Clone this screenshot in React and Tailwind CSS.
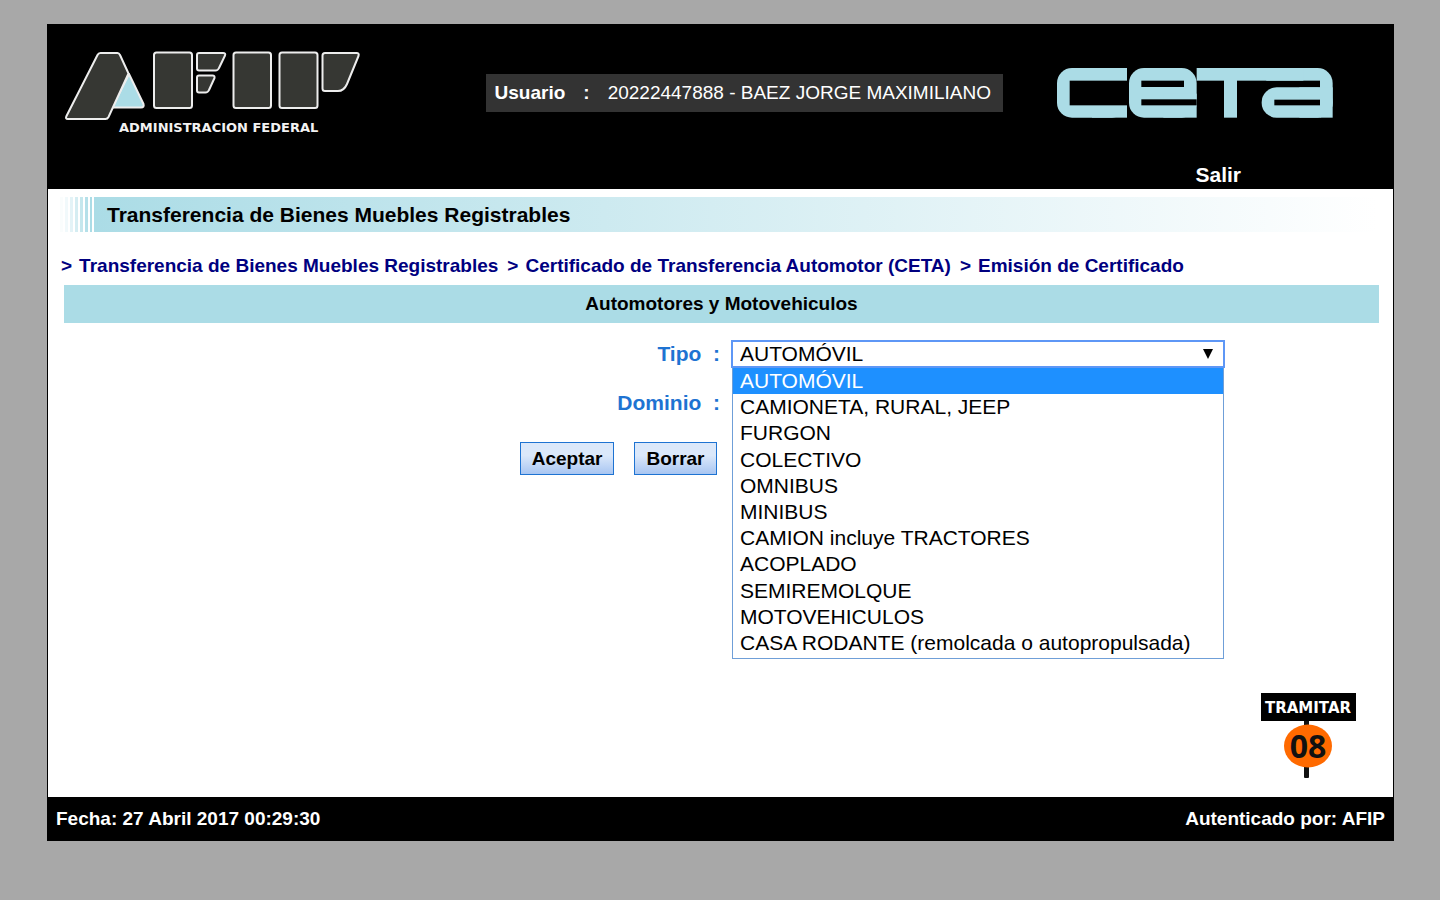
import { useState } from "react";

const TIPOS = [
  "AUTOMÓVIL",
  "CAMIONETA, RURAL, JEEP",
  "FURGON",
  "COLECTIVO",
  "OMNIBUS",
  "MINIBUS",
  "CAMION incluye TRACTORES",
  "ACOPLADO",
  "SEMIREMOLQUE",
  "MOTOVEHICULOS",
  "CASA RODANTE (remolcada o autopropulsada)",
];

const RUTA = [
  "Transferencia de Bienes Muebles Registrables",
  "Certificado de Transferencia Automotor (CETA)",
  "Emisión de Certificado",
];

function LogoAfip() {
  return (
    <svg width="298" height="84" viewBox="64 51 298 84" role="img" aria-label="AFIP">
      <g fill="#363733" stroke="#ededed" strokeWidth="2" strokeLinejoin="round">
        <path d="M129 74 L143.500 104 Q144.500 107.500 141 107.500 H112 Z" fill="#abdce6" />
        <path d="M100.500 53 H117.500 Q119 53 120 55 L128.500 73.500 L108.500 117 Q107.500 119 105.500 119 H68 Q65 119 66.500 116 L97.500 55 Q98.500 53 100.500 53 Z" />
        <rect x="154" y="52.500" width="38" height="55.500" rx="2.500" />
        <path d="M199 53 H223 Q226 53 225 55.500 L219 68 Q218 70.500 215.500 70.500 H199 Q197 70.500 197 68.500 V55 Q197 53 199 53 Z" />
        <path d="M199 75.500 H212.500 Q215 75.500 214.500 78 L209 90 Q208 92.500 205.500 92.500 H199 Q197 92.500 197 90.500 V77.500 Q197 75.500 199 75.500 Z" />
        <rect x="233.500" y="52.500" width="37.500" height="55.500" rx="2.500" />
        <rect x="279.500" y="52.500" width="38" height="55.500" rx="2.500" />
        <path d="M325 53 H356.500 Q359.500 53 358.500 56 L347 84 Q344 91 338 91 H325 Q322.500 91 322.500 88.500 V55.500 Q322.500 53 325 53 Z" />
      </g>
      <text x="119" y="132" fill="#f2f2f2" className="font-['DejaVu_Sans'] text-[13px] font-bold">
        ADMINISTRACION FEDERAL
      </text>
    </svg>
  );
}

function LogoCeta() {
  return (
    <svg width="276" height="50" viewBox="52 53 828 150" role="img" aria-label="CETA">
      <g fill="#abdce6">
        <rect x="52" y="53" width="210" height="149" rx="45" />
        <rect x="157" y="53" width="105" height="149" />
        <rect x="90" y="91" width="172" height="74" fill="#000" />

        <rect x="268" y="53" width="203" height="149" rx="45" />
        <rect x="371" y="130" width="100" height="72" />
        <rect x="305" y="91" width="128" height="19" fill="#000" />
        <rect x="305" y="147" width="166" height="18" fill="#000" />

        <rect x="679" y="53" width="200" height="149" rx="45" />
        <rect x="650" y="91" width="191" height="112" fill="#000" />
        <rect x="471" y="53" width="320" height="38" />
        <rect x="553" y="53" width="39" height="149" />
        <rect x="666" y="111" width="213" height="91" rx="45" />
        <rect x="779" y="111" width="100" height="91" />
        <rect x="704" y="148" width="137" height="17" fill="#000" />
      </g>
    </svg>
  );
}

function Tramitar() {
  return (
    <svg width="96" height="86" viewBox="0 0 96 86" role="img" aria-label="Tramitar 08">
      <rect x="43" y="24" width="5" height="61" rx="1" fill="#111" />
      <rect x="0" y="0" width="95" height="28" fill="#000" />
      <ellipse cx="47" cy="53" rx="24" ry="21.500" fill="#ff6a00" />
      <text
        x="47"
        y="20"
        textAnchor="middle"
        fill="#fff"
        className="font-['DejaVu_Sans'] text-[15px] font-bold"
      >
        TRAMITAR
      </text>
      <text
        x="47"
        y="65"
        textAnchor="middle"
        fill="#111"
        className="font-['Noto_Sans'] text-[32px] font-bold"
      >
        08
      </text>
    </svg>
  );
}

export default function App() {
  const [tipo, setTipo] = useState(TIPOS[0]);
  const [abierto, setAbierto] = useState(true);

  const elegir = (valor) => {
    setTipo(valor);
    setAbierto(false);
  };

  return (
    <div className="flex min-h-screen flex-col bg-[#a8a8a8] pt-6 pr-[46px] pb-[59px] pl-[47px] font-['Liberation_Sans',Arial,sans-serif] text-[19px] leading-6 text-black">
      <div className="flex flex-1 flex-col border border-black bg-white">
        {/* Encabezado */}
        <header className="bg-black pt-[26px] pb-[2px] text-white">
          <div className="flex items-center pr-[60px] pl-4">
            <LogoAfip />
            <p className="mr-[54px] ml-auto flex h-[38px] items-center bg-[#333] pr-3 pl-[9px]">
              <span className="font-bold">Usuario</span>
              <span className="mx-[18px] font-bold">:</span>
              <span>20222447888 - BAEZ JORGE MAXIMILIANO</span>
            </p>
            <LogoCeta />
          </div>
          <nav className="mt-7 flex justify-end pr-[152px]">
            <a href="#salir" className="text-[21px] font-bold">
              Salir
            </a>
          </nav>
        </header>

        {/* Contenido */}
        <main className="flex flex-1 flex-col pt-2">
          <div className="mr-4 ml-3 flex h-[35px]">
            <div className="flex gap-[2px] pr-[2px]">
              <span className="w-[3px] bg-[#fafdfd]" />
              <span className="w-[3px] bg-[#f1f9fb]" />
              <span className="w-[3px] bg-[#e3f3f7]" />
              <span className="w-[3px] bg-[#d5edf2]" />
              <span className="w-[3px] bg-[#c5e7ed]" />
              <span className="w-[3px] bg-[#b5e0e9]" />
              <span className="w-[2px] bg-[#abdce6]" />
            </div>
            <h1 className="flex flex-1 items-center bg-linear-to-r from-[#abdce6] to-white pl-[13px] text-[21px] font-bold">
              Transferencia de Bienes Muebles Registrables
            </h1>
          </div>

          <nav className="mt-[22px] flex flex-wrap gap-x-[9px] pl-[13px] font-bold text-[#000080]">
            {RUTA.map((paso) => (
              <span key={paso} className="flex gap-[7px]">
                <span>&gt;</span>
                <a href="#ruta">{paso}</a>
              </span>
            ))}
          </nav>

          <h2 className="mt-[7px] mr-[14px] ml-4 flex h-[38px] items-center justify-center bg-[#abdce6] font-bold">
            Automotores y Motovehiculos
          </h2>

          <form className="mt-[17px]" onSubmit={(e) => e.preventDefault()}>
            <div className="grid grid-cols-2 items-center gap-x-[11px] gap-y-[21px] pl-[10px] text-[21px]">
              <label htmlFor="tipo" className="text-right font-bold text-[#1e73d2]">
                Tipo&nbsp; :
              </label>
              <div className="relative w-[494px]">
                <select
                  id="tipo"
                  value={tipo}
                  onChange={(e) => elegir(e.target.value)}
                  onMouseDown={() => setAbierto(false)}
                  className="block h-7 w-full appearance-none border-2 border-[#5e97f6] bg-white pl-[7px] leading-6"
                >
                  {TIPOS.map((t) => (
                    <option key={t}>{t}</option>
                  ))}
                </select>
                <svg
                  className="pointer-events-none absolute top-[9px] right-3"
                  width="10"
                  height="10"
                  viewBox="0 0 10 10"
                >
                  <path d="M0 0 H10 L5 10 Z" />
                </svg>
                {abierto && (
                  <ul
                    role="listbox"
                    aria-label="Tipo"
                    className="absolute top-full right-px left-px z-10 flex h-[291px] flex-col border border-t-0 border-[#6f9fd8] bg-white pb-[2px]"
                  >
                    {TIPOS.map((t) => (
                      <li
                        key={t}
                        role="option"
                        aria-selected={t === tipo}
                        onClick={() => elegir(t)}
                        className={`flex flex-1 items-center pl-[7px] ${
                          t === tipo ? "bg-[#1e90ff] text-white" : ""
                        }`}
                      >
                        {t}
                      </li>
                    ))}
                  </ul>
                )}
              </div>

              <label htmlFor="dominio" className="text-right font-bold text-[#1e73d2]">
                Dominio&nbsp; :
              </label>
              <input
                id="dominio"
                type="text"
                className="ml-1 h-7 w-[160px] border border-[#1e73d2] px-1"
              />
            </div>

            <div className="mt-[25px] flex w-1/2 justify-end gap-5 pr-1">
              <button
                type="submit"
                className="h-[33px] border border-[#1e73d2] bg-linear-to-b from-[#dbe8fa] from-40% to-[#a9c6f2] px-[11px] font-bold"
              >
                Aceptar
              </button>
              <button
                type="reset"
                className="h-[33px] border border-[#1e73d2] bg-linear-to-b from-[#dbe8fa] from-40% to-[#a9c6f2] px-[11px] font-bold"
              >
                Borrar
              </button>
            </div>
          </form>

          <div className="mt-auto mr-9 mb-[18px] self-end">
            <Tramitar />
          </div>
        </main>

        {/* Pie */}
        <footer className="flex h-[43px] items-center justify-between bg-black px-2 font-bold text-white">
          <span>Fecha: 27 Abril 2017 00:29:30</span>
          <span>Autenticado por: AFIP</span>
        </footer>
      </div>
    </div>
  );
}
